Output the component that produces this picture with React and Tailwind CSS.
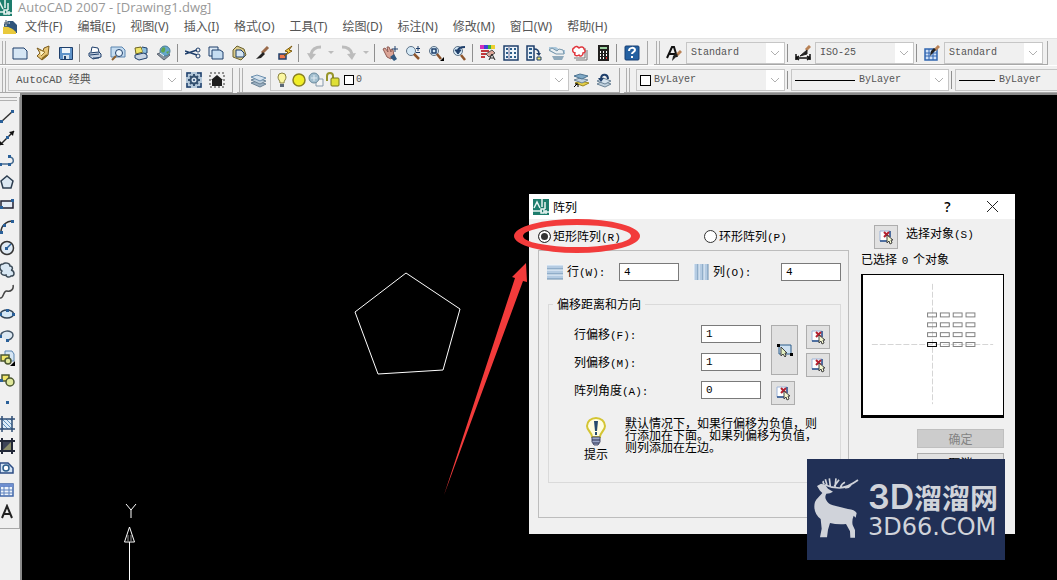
import { useState } from "react";

const menus = [
  "文件(F)",
  "编辑(E)",
  "视图(V)",
  "插入(I)",
  "格式(O)",
  "工具(T)",
  "绘图(D)",
  "标注(N)",
  "修改(M)",
  "窗口(W)",
  "帮助(H)",
];

const N = "#1f3f6b"; // navy outline
const Y = "#f0e66a";

const icons = {
  new: <path d="M1 3h11l3 3v8H1z" fill="#d6e6f4" stroke={N} />,
  open: (
    <>
      <path d="M2 3l6 3 1-3 5-2-1 9-6 5-5-4 3-3z" fill="#e8c777" stroke="#7a5a1c" />
      <path d="M5 5l5 2-4 4" fill="#fff4c8" stroke="#9a7a30" />
      <path d="M7 14l5-4" stroke="#8a6a20" strokeWidth="2" />
    </>
  ),
  save: (
    <>
      <path d="M1.500 2.500h13v12h-12l-1-1z" fill="#5f93c9" stroke={N} />
      <path d="M4 3h8v5H4z" fill="#eef5fb" />
      <path d="M5 10h6v4H5z" fill="#d7e4ef" />
      <path d="M6 11h2v3H6z" fill={N} />
    </>
  ),
  print: (
    <>
      <path d="M4 7l1-5 6 1 1 4" fill="#fff" stroke={N} />
      <path d="M2 8l10-1 2 2v3l-8 2-4-3z" fill="#c8d4e4" stroke={N} />
      <path d="M3 10l9-1M6 13h6" stroke={N} />
    </>
  ),
  preview: (
    <>
      <path d="M1 2h11l3 3v7H1z" fill="#c5dcf0" stroke="#5a85b0" />
      <circle cx="9" cy="8" r="3.500" fill="#eaf4fc" stroke={N} />
      <path d="M6 11l-4 4" stroke="#8a6030" strokeWidth="2" />
    </>
  ),
  publish: (
    <>
      <path d="M2 3l6-1 2 5-7 2z" fill={Y} stroke="#6d6320" />
      <path d="M9 2l5 1v5l-4 1" fill="#8fc0dd" stroke={N} />
      <path d="M2 10l9-2 3 2v3l-8 2-4-2z" fill="#c8d4e4" stroke={N} />
    </>
  ),
  globe: (
    <>
      <path d="M1 9l8-3 5 4-6 5z" fill="#87919e" stroke="#5c6672" />
      <circle cx="9" cy="6" r="5" fill="#65a7ce" stroke="#4b7c94" />
      <path d="M6 3c3-2 4 1 3 3s-3 2-4 0zM10 7l3-1-1 3z" fill="#5fa34c" />
      <path d="M4 8l4 3" stroke="#fff" />
    </>
  ),
  cut: (
    <>
      <path d="M0 6l12 4M0 9l12-4" stroke={N} strokeWidth="1.500" />
      <circle cx="13" cy="5" r="2" fill="none" stroke={N} />
      <circle cx="13" cy="11" r="2" fill="none" stroke={N} />
    </>
  ),
  copy: (
    <>
      <path d="M1 2h9v9H1z" fill="#dce9f5" stroke={N} />
      <path d="M4 5h8l3 2v7H4z" fill="#c5dcf0" stroke={N} />
    </>
  ),
  paste: (
    <>
      <path d="M2 5l4-4 7 3 2 6-5 5-8-3z" fill="#d8c98a" stroke="#6a612e" />
      <path d="M5 5h5l3 3v4H5z" fill="#d6e6f4" stroke={N} />
    </>
  ),
  brush: (
    <>
      <path d="M14 2L8 8" stroke="#9a6a4a" strokeWidth="3" />
      <path d="M9 7L2 14l5-1 4-4z" fill="#222" />
    </>
  ),
  match: (
    <>
      <path d="M2 9h7v5H2z" fill="#f0774a" stroke={N} strokeWidth="1.500" />
      <path d="M15 1l-7 5 3 1-4 4 8-5-3-1z" fill="#f6cf3f" stroke="#7c5a10" />
    </>
  ),
  undo: (
    <>
      <path d="M15 2C9 2 6 5 5 9" fill="none" stroke="#bcbcbc" strokeWidth="3" />
      <path d="M10 9L1 8l4 7z" fill="#bcbcbc" />
    </>
  ),
  redo: (
    <>
      <path d="M1 2c6 0 9 3 10 7" fill="none" stroke="#bcbcbc" strokeWidth="3" />
      <path d="M6 9l9-1-4 7z" fill="#bcbcbc" />
    </>
  ),
  pan: (
    <>
      <path d="M1 4l2-1 3 4-1-5 2 0 2 5 0-3 2 1 1 6-3 3-4-2z" fill="#dca597" stroke="#8e5c55" />
      <path d="M8 12l4-3 3 5-3 2z" fill="#31587f" />
      <path d="M13 1v6M10 4h6" stroke={N} />
    </>
  ),
  zoom: (
    <>
      <circle cx="6" cy="6" r="4.500" fill="#d5e9f6" stroke="#5d7288" />
      <path d="M9 9l5 5" stroke="#8d552c" strokeWidth="2.500" />
      <path d="M13 1v5M11 3.500h4M11 7.500h4" stroke={N} />
    </>
  ),
  zoomWindow: (
    <>
      <circle cx="6" cy="6" r="4.500" fill="#d5e9f6" stroke="#5d7288" />
      <path d="M4 4h4v4H4z" fill="none" stroke={N} strokeWidth="1.500" />
      <path d="M9 9l4 5" stroke="#8d552c" strokeWidth="2.500" />
      <path d="M16 12v4h-4z" fill="#000" />
    </>
  ),
  zoomBack: (
    <>
      <circle cx="7" cy="6" r="4.500" fill="#d5e9f6" stroke="#5d7288" />
      <path d="M4 5h6L7 9z" fill={N} stroke={N} />
      <path d="M7 6c0-3 3-4 7-4" fill="none" stroke={N} strokeWidth="2" />
      <path d="M10 10l4 5" stroke="#8d552c" strokeWidth="2.500" />
    </>
  ),
  props: (
    <>
      <path d="M0 0h4v4H0z" fill="#d22fb8" />
      <path d="M4 0h4v4H4z" fill="#3a42d8" />
      <path d="M8 0h3v4H8z" fill="#35b245" />
      <path d="M11 0h4v4h-4z" fill="#edcf2f" />
      <path d="M1 6h8M1 9h5M1 12h4" stroke="#c0383b" strokeWidth="2" />
      <path d="M6 9l6-4 3 3-6 4z" fill="#dca597" stroke="#555" />
      <path d="M9 15l3-6 3 6M10 13h4" fill="none" stroke="#222" />
    </>
  ),
  center: (
    <>
      <path d="M1 1h14v14H1z" fill="#eef4fa" stroke={N} strokeWidth="1.500" />
      <path d="M3 4h2M3 8h2M3 12h2M7 4h2M7 8h2M7 12h2M11 4h2M11 8h2M11 12h2" stroke="#2c5d8a" strokeWidth="2" />
      <path d="M6 1v14" stroke="#779" />
    </>
  ),
  palettes: (
    <>
      <path d="M1 1h7v14H1z" fill="#e4eef7" stroke={N} strokeWidth="1.500" />
      <path d="M3 4h3M3 8h3M3 12h3" stroke="#2c5d8a" strokeWidth="2" />
      <path d="M8 4c4 0 5 2 5 5" fill="none" stroke={N} strokeWidth="1.500" />
      <path d="M10 8h5l-2 3z" fill={N} />
      <path d="M11 12h4v3h-4z" fill={Y} stroke={N} />
    </>
  ),
  sheet: (
    <>
      <path d="M0 2h7l4 3h5v4H6L0 6z" fill="#a9c6da" />
      <path d="M0 5l7 4h8l-1-4-4-1-2 2-5-3z" fill="#e8eef2" stroke="#7796ab" />
      <path d="M3 11h12l-2 4H5z" fill="#8fa9bb" />
    </>
  ),
  markup: (
    <>
      <path d="M4 15h11V5M2 13h11V3" fill="none" stroke="#777" />
      <path d="M2 3c2-3 4-1 5 0 2-2 5-1 5 1 2 2 1 4-1 4 0 3-3 4-4 2-3 2-5 0-4-2-3-1-3-4-1-5z" fill="#fff" stroke="#e1363d" strokeWidth="1.500" />
    </>
  ),
  calc: (
    <>
      <path d="M3 0h11v16H3z" fill="#22201f" />
      <path d="M5 2h7v2H5z" fill="#9ad09e" />
      <path d="M5 7h1M8 7h1M11 7h1M5 10h1M8 10h1M11 10h1M5 13h1M8 13h1" stroke="#fff" strokeWidth="2" />
      <path d="M11 13h1" stroke="#e33" strokeWidth="2" />
    </>
  ),
  help: (
    <>
      <rect x="1" y="1" width="14" height="14" rx="1" fill="#2461a2" stroke="#173f73" />
      <path d="M5 6c0-4 6-4 6-1 0 2-3 2-3 4M8 11v2" fill="none" stroke="#fff" strokeWidth="2" />
    </>
  ),
  textStyle: (
    <>
      <path d="M1 13L6 2h2l3 10M3 9h6" fill="none" stroke="#111" strokeWidth="2" />
      <path d="M15 6l-4 4" stroke="#b98256" strokeWidth="3" />
      <path d="M12 10l-6 6 1-5 3-3z" fill="#222" />
    </>
  ),
  dimStyle: (
    <>
      <path d="M1 9v6M15 9v6M1 13h14M4 11l-3 2 3 2M12 11l3 2-3 2" fill="none" stroke="#111" strokeWidth="1.500" />
      <path d="M15 1l-4 4" stroke="#b98256" strokeWidth="3" />
      <path d="M12 5L5 11l7-2z" fill="#222" stroke="#222" />
    </>
  ),
  tableStyle: (
    <>
      <path d="M1 4h12v11H1z" fill="#cfe1f8" stroke="#3165b0" strokeWidth="1.500" />
      <path d="M1 8h12M1 11h12M5 4v11M9 4v11" stroke="#3165b0" />
      <path d="M15 1l-4 4" stroke="#b98256" strokeWidth="3" />
      <path d="M12 5l-6 6 1-5 3-3z" fill="#222" />
    </>
  ),
  workspace: (
    <>
      <path d="M0 0h16v16H0z" fill="#b4c8da" />
      <path d="M1 5V1h4M11 1h4v4M15 11v4h-4M5 15H1v-4" stroke={N} strokeWidth="1.500" />
      <path d="M8 2v3M8 11v3M2 8h3M11 8h3M4 4l2 2M12 4l-2 2M4 12l2-2M12 12l-2-2" stroke="#34506f" strokeWidth="2" />
      <circle cx="8" cy="8" r="3.500" fill="#d9e4ee" stroke="#34506f" strokeWidth="2" />
      <circle cx="8" cy="8" r="1" fill={N} />
    </>
  ),
  home: (
    <>
      <path d="M1 1h14v14H1z" fill="none" stroke="#333" strokeDasharray="2 2" />
      <path d="M8 3l6 5h-1v6H3V8H2z" fill="#1d1d1d" />
    </>
  ),
  layers: (
    <>
      <path d="M0 11l6-2 9 3-6 3z" fill="#9bb0c2" stroke="#6b8396" />
      <path d="M0 8l6-2 9 3-6 3z" fill="#bfd0dd" stroke="#6b8396" />
      <path d="M0 5l6-2 9 3-6 3z" fill="#d6e3ee" stroke="#6b8fae" />
    </>
  ),
  layerCurrent: (
    <>
      <path d="M2 11l6-2 8 2-6 3z" fill="#e5cf45" stroke="#9a8620" />
      <path d="M1 8l6-2 8 2-6 3z" fill="#bfd0dd" stroke="#6b8396" />
      <path d="M1 4l6-2 8 2-6 3z" fill="#7fa9c6" stroke="#4c7391" />
      <path d="M1 15l3-3M2 12h3v3" fill="none" stroke="#000" />
    </>
  ),
  layerBack: (
    <>
      <path d="M1 12l6-3 8 3-6 3z" fill="#bfd0dd" stroke="#6b8396" />
      <path d="M1 9l6-3 8 3-6 3z" fill="#d6e3ee" stroke="#6b8396" />
      <path d="M5 6c1-5 7-4 7 1" fill="none" stroke={N} strokeWidth="2" />
      <path d="M2 6h6L5 10z" fill={N} />
    </>
  ),
  bulb: (
    <>
      <path d="M6 11c0-3-2-3-2-6a4 4 0 018 0c0 3-2 3-2 6z" fill="#fbf7a0" stroke="#8b8340" />
      <path d="M6 12h4v3H6z" fill="#5b6878" />
    </>
  ),
  sun: <circle cx="8" cy="8" r="6" fill="#f1ee27" stroke="#8a8120" strokeWidth="1.500" />,
  freeze: (
    <>
      <path d="M8 7h7v7H8z" fill="#f4f4f4" stroke="#8599ab" />
      <circle cx="6" cy="6" r="5" fill="#a3bfcf" stroke="#68899d" />
      <path d="M3 6h6M6 3v6" stroke="#dfeaf1" />
    </>
  ),
  lock: (
    <>
      <path d="M2 9V4c0-4 6-4 6 0v3" fill="none" stroke="#97952a" strokeWidth="2" />
      <rect x="6" y="6" width="8" height="8" rx="1" fill="#dfe036" stroke="#77761c" />
    </>
  ),
  line: (
    <>
      <path d="M2 14L14 3" stroke="#333" strokeWidth="1.500" />
      <path d="M1 12h3v3H1zM12 2h3v3h-3z" fill="#2a6099" />
    </>
  ),
  xline: (
    <>
      <path d="M1 15L15 1" stroke="#222" strokeWidth="1.500" />
      <path d="M15 1l-1 5-4-4zM1 15v-4l4 4z" fill="#111" />
      <path d="M7 6h3v3H7z" fill="#2a6099" />
    </>
  ),
  pline: (
    <>
      <path d="M1 12h10c5-1 4-7-1-7" fill="none" stroke="#456a8e" strokeWidth="1.500" />
      <path d="M0 11h3v3H0zM9 11h3v3H9zM9 3h3v3H9z" fill="#2a6099" />
    </>
  ),
  polygon: <path d="M8 2l6 5-2 7H4L2 7z" fill="#dce8f2" stroke="#2d3e50" strokeWidth="1.500" />,
  rect: (
    <>
      <path d="M2 5h12v7H2z" fill="#e4ebf5" stroke="#223" strokeWidth="1.500" />
      <path d="M1 10h3v3H1zM12 3h3v3h-3z" fill="#2a6099" />
    </>
  ),
  arc: (
    <>
      <path d="M2 14C2 8 7 3 14 3" fill="none" stroke="#333" strokeWidth="1.500" />
      <path d="M1 13h3v3H1zM4 6h3v3H4zM12 2h3v3h-3z" fill="#2a6099" />
    </>
  ),
  circle: (
    <>
      <circle cx="8" cy="8" r="6.500" fill="#dfeaf4" stroke="#333" strokeWidth="1.500" />
      <path d="M8 8l4-4" stroke="#2a6099" strokeWidth="1.500" />
      <path d="M6 7h3v3H6z" fill="#2a6099" />
    </>
  ),
  cloud: (
    <path d="M3 9C0 7 0 2 4 2c2-2 7-1 7 2 3 0 3 4 1 4 4 1 4 6 0 6-2 2-5 1-5-1-4 1-6-2-4-4z" fill="#d9e8f4" stroke="#3c4b58" strokeWidth="1.500" />
  ),
  spline: <path d="M1 14c4 1 3-8 7-7s7-2 6-6" fill="none" stroke="#444" strokeWidth="1.500" />,
  ellipse: (
    <>
      <ellipse cx="8" cy="8" rx="6.500" ry="4" fill="#d4e7f5" stroke="#345" strokeWidth="1.500" />
      <path d="M0 7h3v3H0zM13 7h3v3h-3zM7 3h3v3H7z" fill="#2a6099" />
    </>
  ),
  ellipseArc: (
    <>
      <path d="M2 9C0 2 14 1 14 7c0 3-3 5-6 5" fill="#dce8f2" stroke="#456" strokeWidth="1.500" />
      <path d="M0 7h3v3H0zM7 11h3v3H7z" fill="#2a6099" />
    </>
  ),
  insert: (
    <>
      <path d="M6 1h7l2 3v7H6z" fill="#d6e6f4" stroke="#5a85b0" />
      <path d="M2 5h8v6H2z" fill={Y} stroke="#4b5730" strokeWidth="1.500" />
      <circle cx="9" cy="11" r="3" fill="#dfe79b" stroke="#4b5730" strokeWidth="1.500" />
      <path d="M16 11v5h-5z" fill="#000" />
    </>
  ),
  block: (
    <>
      <path d="M3 3h7v6H3z" fill={Y} stroke="#4b5730" strokeWidth="1.500" />
      <circle cx="11" cy="10" r="4" fill="#dfe79b" stroke="#4b5730" strokeWidth="1.500" />
      <path d="M1 7h3v3H1z" fill="#2a6099" />
    </>
  ),
  point: <path d="M7 7h3v3H7z" fill="#2a6099" />,
  hatch: (
    <>
      <path d="M3 3h10v10H3z" fill="#dcecf8" />
      <path d="M3 3l10 10M7 3l6 6M3 7l6 6M11 3l2 2M3 11l2 2" stroke="#5f92bd" />
      <path d="M3 0v16M13 0v16M0 3h16M0 13h16" stroke="#2c4c74" strokeWidth="1.500" />
    </>
  ),
  gradient: (
    <>
      <path d="M3 3h10v10H3z" fill="#3d4457" />
      <path d="M13 3v10H3z" fill="#8b8d6a" />
      <path d="M3 0v16M13 0v16M0 3h16M0 13h16" stroke="#222838" strokeWidth="2" />
    </>
  ),
  region: (
    <>
      <path d="M1 13V3h8l5 5v5z" fill="#d4e4f4" stroke="#2c4c84" strokeWidth="1.500" />
      <circle cx="7" cy="8" r="3" fill="#fff" stroke="#2c5d8a" strokeWidth="1.500" />
    </>
  ),
  table: (
    <>
      <path d="M1 2h13v12H1z" fill="#eef4fb" stroke="#4066a8" strokeWidth="1.500" />
      <path d="M1 2h13v3H1z" fill="#6f8fd0" />
      <path d="M1 8h13M1 11h13M5 4v10M10 4v10" stroke="#5c80bd" />
    </>
  ),
  mtext: <path d="M3 14L8 2l5 12M5 10h6" fill="none" stroke="#222" strokeWidth="2" />,
  rows: (
    <>
      <path d="M0 1h16v14H0z" fill="#b4cbe2" />
      <path d="M0 5h16M0 10h16M0 15h16" stroke="#6d8fb0" />
      <path d="M0 1h16M0 6h16M0 11h16" stroke="#eef6fd" />
    </>
  ),
  cols: (
    <>
      <path d="M1 0h14v16H1z" fill="#b4cbe2" />
      <path d="M5 0v16M10 0v16M15 0v16" stroke="#6d8fb0" />
      <path d="M1 0v16M6 0v16M11 0v16" stroke="#eef6fd" />
    </>
  ),
  pick: (
    <>
      <path d="M2 2h10v10H2z" fill="#fff" stroke="#9db4d8" />
      <path d="M2 12h8M12 2v6" stroke="#29508a" strokeWidth="1.500" />
      <path d="M6 3l5 5M11 3L6 8" stroke="#b3202e" strokeWidth="2" />
      <path d="M9 6v8l2-2 1 3 2-1-1-3h2z" fill="#f3f7cf" stroke="#444" />
    </>
  ),
  pickBoth: (
    <>
      <path d="M2 3h12v9H2z" fill="#cfe2f2" stroke="#2c5d8a" />
      <path d="M0 2h3v3H0zM13 11h3v3h-3z" fill="#000" />
      <path d="M4 5v9l2-2 2 3 1-1-1-3h2z" fill="#e3efc0" stroke="#444" />
    </>
  ),
  app: (
    <>
      <path d="M0 0h16v16H0z" fill="#1d7d6d" />
      <path d="M1 9l3-6 3 6M9 0v8M0 12h9M12 3v7M8 10h3v4H8zM13 11v4M11 13h5" fill="none" stroke="#e8f4f1" strokeWidth="1.500" />
    </>
  ),
  drawing: (
    <>
      <path d="M2 14V5l4-3h5l4 4v8z" fill="#2f557c" />
      <path d="M1 15V8c5-1 9 1 13 5v2z" fill="#e9c93c" />
      <path d="M4 0v7M1 4h7" stroke="#fff" />
      <path d="M4 1v5M2 4h5" stroke="#456" />
    </>
  ),
};

function Icon({ name }) {
  return (
    <svg viewBox="0 0 16 16" className="size-4 shrink-0" fill="none" aria-hidden="true">
      {icons[name]}
    </svg>
  );
}

function ToolButton({ name }) {
  return (
    <button aria-label={name} className="flex h-full w-[23px] shrink-0 items-center justify-center">
      <Icon name={name} />
    </button>
  );
}

function Sep() {
  return <span className="mr-[3px] ml-0.5 h-[18px] w-px shrink-0 bg-[#8f8f8f]" />;
}

function Grip() {
  return <span className="h-full w-1 shrink-0 border-x border-[#b0b0b0]" />;
}

function Drop() {
  return (
    <button aria-label="more" className="flex w-3 shrink-0 justify-center">
      <svg viewBox="0 0 6 4" className="h-1 w-1.5">
        <path d="M0 0h6L3 3z" fill="#bcbcbc" />
      </svg>
    </button>
  );
}

function Combo({ label, value, className, pad = "pl-1", size = "text-[10px]", children }) {
  return (
    <div className={`relative h-[22px] shrink-0 ${className}`}>
      <select
        aria-label={label}
        className={`h-full w-full appearance-none border border-[#c6c6c6] bg-[#f0f0f0] font-['Liberation_Mono','Noto_Sans_CJK_SC',monospace] text-[#555] ${size} ${pad}`}
      >
        <option>{value}</option>
      </select>
      <div className="pointer-events-none absolute inset-y-0 left-0 flex items-center">{children}</div>
      <span className="pointer-events-none absolute inset-y-px right-px flex w-[18px] items-center justify-center bg-white">
        <svg viewBox="0 0 10 6" className="h-1.5 w-2.5" fill="none">
          <path d="M1 1l4 4 4-4" stroke="#b0b0b0" />
        </svg>
      </span>
    </div>
  );
}

function StyleIcon({ name }) {
  return (
    <span className="flex w-6 shrink-0 justify-center">
      <Icon name={name} />
    </span>
  );
}

const bar = "flex h-full shrink-0 items-center border-r border-b border-[#a8a8a8] pl-0.5";

function Toolbars() {
  return (
    <div className="bg-[#f0f0f0]">
      <div className="flex h-[27px] gap-1.5 overflow-hidden border-t border-[#e3e3e3] pt-0.5">
        <div className={bar}>
          <Grip />
          <span className="w-0.5 shrink-0" />
          {["new", "open", "save"].map((n) => <ToolButton key={n} name={n} />)}
          <Sep />
          {["print", "preview", "publish", "globe"].map((n) => <ToolButton key={n} name={n} />)}
          <Sep />
          {["cut", "copy", "paste", "brush", "match"].map((n) => <ToolButton key={n} name={n} />)}
          <Sep />
          <ToolButton name="undo" />
          <Drop />
          <ToolButton name="redo" />
          <Drop />
          <Sep />
          {["pan", "zoom", "zoomWindow", "zoomBack"].map((n) => <ToolButton key={n} name={n} />)}
          <Sep />
          {["props", "center", "palettes", "sheet", "markup", "calc"].map((n) => <ToolButton key={n} name={n} />)}
          <Sep />
          <ToolButton name="help" />
          <span className="w-1 shrink-0" />
        </div>
        <div className={bar}>
          <Grip />
          <div className="flex items-center pr-1 pl-0.5">
            <StyleIcon name="textStyle" />
            <Combo label="文字样式" value="Standard" className="w-[99px]" />
            <Sep />
            <StyleIcon name="dimStyle" />
            <Combo label="标注样式" value="ISO-25" className="w-[99px]" />
            <Sep />
            <StyleIcon name="tableStyle" />
            <Combo label="表格样式" value="Standard" className="w-[99px]" />
          </div>
        </div>
      </div>
      <div className="flex h-7 gap-1 overflow-hidden border-t border-white pt-0.5">
        <div className={bar}>
          <Grip />
          <Combo label="工作空间" value="AutoCAD 经典" className="ml-0.5 w-[174px]" size="text-[11px]" pad="pl-[7px]" />
          <ToolButton name="workspace" />
          <ToolButton name="home" />
          <span className="w-1" />
        </div>
        <div className={bar}>
          <Grip />
          <span className="w-1" />
          <ToolButton name="layers" />
          <Combo label="图层" value="0" className="w-[299px]" pad="pl-[85px]">
            <div className="flex items-center gap-px pl-1">
              <Icon name="bulb" />
              <Icon name="sun" />
              <Icon name="freeze" />
              <Icon name="lock" />
              <span className="ml-0.5 size-[10px] border border-black bg-white" />
            </div>
          </Combo>
          <ToolButton name="layerCurrent" />
          <ToolButton name="layerBack" />
          <span className="w-1" />
        </div>
        <div className={bar}>
          <Grip />
          <div className="flex items-center pl-1.5">
            <Combo label="颜色" value="ByLayer" className="w-[149px]" pad="pl-[17px]">
              <span className="ml-1 size-[11px] border border-black bg-white" />
            </Combo>
            <Sep />
            <Combo label="线型" value="ByLayer" className="w-[158px]" pad="pl-[67px]">
              <span className="ml-1 h-px w-[60px] bg-black" />
            </Combo>
            <Sep />
            <Combo label="线宽" value="ByLayer" className="w-[158px]" pad="pl-[43px]">
              <span className="ml-1 h-px w-[36px] bg-black" />
            </Combo>
          </div>
        </div>
      </div>
    </div>
  );
}

const drawTools = [
  "line",
  "xline",
  "pline",
  "polygon",
  "rect",
  "arc",
  "circle",
  "cloud",
  "spline",
  "ellipse",
  "ellipseArc",
  "insert",
  "block",
  "point",
  "hatch",
  "gradient",
  "region",
  "table",
  "mtext",
];

function DrawBar() {
  return (
    <aside className="w-5 shrink-0 overflow-hidden bg-[#f0f0f0] pt-1">
      <div className="border-r border-b border-[#a8a8a8] pb-[5px]">
        <div className="mr-0.5 mb-1 h-1 border-y border-[#b0b0b0]" />
        <div className="flex w-3.5 flex-col">
          {drawTools.map((n) => (
            <button key={n} aria-label={n} className="flex h-[22px] items-center justify-center">
              <Icon name={n} />
            </button>
          ))}
        </div>
      </div>
    </aside>
  );
}

// chinese caption followed by its latin shortcut
function Caption({ text, hot }) {
  return (
    <>
      {text}
      <span className="font-['Liberation_Mono',monospace] text-[11px]">{hot}</span>
    </>
  );
}

function Field({ id, value, onChange }) {
  return (
    <input
      id={id}
      value={value}
      onChange={(e) => onChange(id, e.target.value)}
      className="h-[18px] w-[60px] border border-[#7a7a7a] bg-white px-1 font-['Liberation_Mono',monospace] text-[11px]"
    />
  );
}

const pickClass = "flex size-6 items-center justify-center border border-[#adadad] bg-[#e1e1e1]";

function Preview() {
  const cells = [];
  for (let r = 0; r < 4; r++) {
    for (let c = 0; c < 4; c++) cells.push([r, c]);
  }
  return (
    <div className="mt-[5px] bg-black pb-0.5 pl-px">
      <svg viewBox="0 0 142 142" className="h-[142px] w-full border border-black bg-white" fill="none">
        <path d="M70.500 9v122M9 70.500h123" stroke="#d4d4d4" strokeDasharray="6 2" />
        {cells.map(([r, c]) => (
          <rect
            key={`${r}${c}`}
            x={65.500 + c * 13}
            y={38.500 + r * 10}
            width="9"
            height="4"
            stroke={r === 3 && c === 0 ? "#000" : "#808080"}
          />
        ))}
      </svg>
    </div>
  );
}

function ArrayDialog() {
  const [mode, setMode] = useState("rect");
  const [form, setForm] = useState({ rowCount: "4", colCount: "4", rowOffset: "1", colOffset: "1", angle: "0" });
  const update = (id, v) => setForm({ ...form, [id]: v });

  return (
    <section
      role="dialog"
      aria-label="阵列"
      className="absolute top-[99px] left-[507px] w-[486px] bg-[#f0f0f0] font-['Noto_Sans_CJK_SC',sans-serif] text-xs leading-4 text-black"
    >
      <header className="flex h-[25px] items-center bg-white pl-1">
        <Icon name="app" />
        <h2 className="ml-1 flex-1">阵列</h2>
        <button aria-label="帮助" className="w-[45px] text-center font-['Open_Sans',sans-serif] text-sm font-semibold">
          ?
        </button>
        <button aria-label="关闭" className="flex w-[45px] justify-center">
          <svg viewBox="0 0 11 11" className="size-[11px]">
            <path d="M0 0l11 11M11 0L0 11" stroke="#222" />
          </svg>
        </button>
      </header>

      <div className="flex justify-between pr-[11px] pb-4 pl-[9px]">
        <div className="w-[311px]">
          <div className="flex h-[31px] items-center pt-1">
            {[
              ["rect", "矩形阵列", "(R)"],
              ["polar", "环形阵列", "(P)"],
            ].map(([id, text, hot]) => (
              <label key={id} className="flex w-[166px] shrink-0 items-center gap-0.5">
                <input
                  type="radio"
                  name="mode"
                  checked={mode === id}
                  onChange={() => setMode(id)}
                  className="size-[13px] appearance-none rounded-full border border-[#333] bg-white checked:bg-[#333] checked:shadow-[inset_0_0_0_2px_#fff]"
                />
                <span>
                  <Caption text={text} hot={hot} />
                </span>
              </label>
            ))}
          </div>

          <div className="border border-[#bdbdbd] pt-3 pb-[34px]">
            <div className="flex h-[18px] items-center pl-2">
              <Icon name="rows" />
              <label htmlFor="rowCount" className="w-14 pl-1">
                <Caption text="行" hot="(W):" />
              </label>
              <Field id="rowCount" value={form.rowCount} onChange={update} />
              <span className="w-3.5" />
              <Icon name="cols" />
              <label htmlFor="colCount" className="w-[72px] pl-1">
                <Caption text="列" hot="(O):" />
              </label>
              <Field id="colCount" value={form.colCount} onChange={update} />
            </div>

            <fieldset className="mt-[15px] mr-[7px] ml-[9px] border border-[#dadada] pb-5">
              <legend className="ml-1 px-1">偏移距离和方向</legend>
              <div className="grid auto-rows-[28px] grid-cols-[127px_70px_35px_24px] pt-[13px] pl-[25px] leading-[18px]">
                <label htmlFor="rowOffset">
                  <Caption text="行偏移" hot="(F):" />
                </label>
                <Field id="rowOffset" value={form.rowOffset} onChange={update} />
                <button aria-label="拾取两个偏移" className="row-span-2 flex h-[50px] w-[27px] items-center justify-center border border-[#adadad] bg-[#e1e1e1]">
                  <Icon name="pickBoth" />
                </button>
                <button aria-label="拾取行偏移" className={pickClass}>
                  <Icon name="pick" />
                </button>
                <label htmlFor="colOffset">
                  <Caption text="列偏移" hot="(M):" />
                </label>
                <Field id="colOffset" value={form.colOffset} onChange={update} />
                <button aria-label="拾取列偏移" className={pickClass}>
                  <Icon name="pick" />
                </button>
                <label htmlFor="angle">
                  <Caption text="阵列角度" hot="(A):" />
                </label>
                <Field id="angle" value={form.angle} onChange={update} />
                <button aria-label="拾取阵列的角度" className={pickClass}>
                  <Icon name="pick" />
                </button>
              </div>
              <div className="mt-2 flex gap-[17px] pl-[35px]">
                <div className="flex w-6 flex-col items-center">
                  <svg viewBox="0 0 20 29" className="h-[29px] w-5" fill="none">
                    <path d="M6 20c0-5-5-6-5-11a9 8 0 0118 0c0 5-5 6-5 11z" fill="#fffde0" stroke="#d4c534" strokeWidth="2" />
                    <path d="M6 20h8v5l-2 3H8l-2-3z" fill="#9aa6c8" stroke="#4b4f6b" />
                    <path d="M6 23h8M7 26h6" stroke="#2a2f4c" />
                    <path d="M8 4h4l-1 10H9zM9 15h2v3H9z" fill="#254a6e" />
                  </svg>
                  <span>提示</span>
                </div>
                <p className="leading-3 whitespace-nowrap">
                  默认情况下，如果行偏移为负值，则
                  <br />
                  行添加在下面。如果列偏移为负值，
                  <br />
                  则列添加在左边。
                </p>
              </div>
            </fieldset>
          </div>
        </div>

        <div className="w-[143px]">
          <div className="flex gap-2 pt-1.5 pl-[13px]">
            <button id="pickObjects" className={pickClass} aria-label="选择对象">
              <Icon name="pick" />
            </button>
            <label htmlFor="pickObjects">
              <Caption text="选择对象" hot="(S)" />
            </label>
          </div>
          <p className="mt-0.5">
            已选择 <span className="px-0.5 font-['Liberation_Mono',monospace] text-[11px]">0</span> 个对象
          </p>
          <Preview />
          <div className="mt-[11px] flex flex-col items-end gap-[5px]">
            <button disabled className="h-[19px] w-[87px] border border-[#bfbfbf] bg-[#ccc] leading-4 text-[#838383]">
              确定
            </button>
            <button className="h-[19px] w-[87px] border border-[#adadad] bg-[#e1e1e1] leading-4">取消</button>
          </div>
        </div>
      </div>
    </section>
  );
}

function Watermark() {
  return (
    <div className="absolute top-[364px] left-[785px] flex h-[101px] w-[198px] bg-[#213056] text-[#d0d3da]">
      <svg viewBox="0 0 165 303" className="h-[101px] w-[55px] shrink-0" fill="none">
        <path
          d="M30 81l12-7 12 3 9 12 15 9-9 5-11 1q-6 10 0 20 6 12 20 15l45 11q20 2 26 12l-3 14-6-6q-6 14-3 28l7 15v23h-14l-1-19-12-22q-28 2-48-3l-6 20-3 23H39l5-26-3-29q-19-14-19-38 0-16 11-26l13-14-7-7z"
          fill="#d0d3da"
        />
        <path
          d="M53 77q22 10 44 10 26-2 56-24M60 78l-5-17M70 83L67 58M84 84l3-26M82 82l14-20M100 86q4-12 14-16M114 86q10 2 18-8M52 76q-6-6-2-10"
          stroke="#d0d3da"
          strokeWidth="5"
        />
      </svg>
      <div className="pt-5 pl-1.5 whitespace-nowrap">
        <div className="flex h-9 items-center text-[28px] leading-9">
          <span className="w-[46px] font-['Inter',sans-serif] text-[34px] font-semibold">3D</span>
          <span className="font-['Noto_Sans_CJK_SC',sans-serif] font-bold">溜溜网</span>
        </div>
        <div className="font-['DejaVu_Sans',sans-serif] text-2xl leading-6">3D66.COM</div>
      </div>
    </div>
  );
}

export default function App() {
  return (
    <div className="flex h-screen flex-col overflow-hidden bg-white font-['Noto_Sans','Noto_Sans_CJK_SC',sans-serif] text-xs">
      <div className="flex h-4 shrink-0 items-start gap-1.5">
        <div className="flex w-3 shrink-0 justify-end overflow-hidden">
          <Icon name="app" />
        </div>
        <h1 className="font-['Open_Sans',sans-serif] text-[13px] leading-[15px] whitespace-nowrap text-[#999]">AutoCAD 2007 - [Drawing1.dwg]</h1>
      </div>
      <nav className="flex h-[22px] shrink-0 items-center gap-[15px] pl-0.5 text-[#555]">
        <Icon name="drawing" />
        <div className="-ml-2 flex gap-[15px]">
          {menus.map((m) => (
            <button key={m} className="whitespace-nowrap">
              {m}
            </button>
          ))}
        </div>
      </nav>
      <Toolbars />
      <div className="flex min-h-0 flex-1 bg-[#f0f0f0]">
        <DrawBar />
        <main className="relative flex-1 overflow-hidden border-t-2 border-l-2 border-[#8a8a8a] bg-black">
          <svg className="absolute inset-0 h-full w-full" fill="none" stroke="#fff">
            <path d="M384 178l54 36-17 61-65 4-23-62z" />
            <path d="M104 409l5 6 5-6M109 415v8" />
            <path d="M107.500 432l-5 15h10zM107.500 447v60" />
            <path d="M106 440v6M109 440v6" stroke="#999" />
          </svg>
          <ArrayDialog />
          <svg className="pointer-events-none absolute inset-0 h-full w-full" fill="#f23b3b">
            <path
              fillRule="evenodd"
              d="M492 141a63 17 0 01126 0a63 17 0 01-126 0zM501 141a54 11 0 00108 0a54 11 0 00-108 0z"
            />
            <path d="M422 400L493 183l-3-1 14-14 1 19-4-1z" />
          </svg>
          <Watermark />
        </main>
      </div>
    </div>
  );
}
